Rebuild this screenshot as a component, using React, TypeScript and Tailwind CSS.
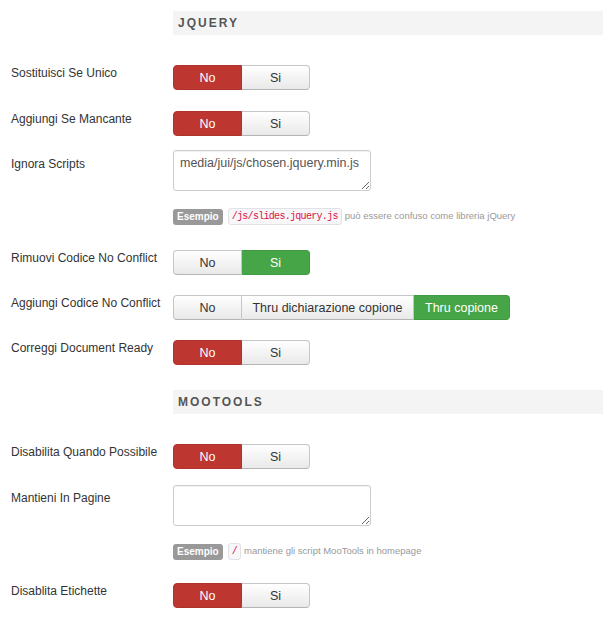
import type { ReactNode } from 'react'

type Seg = { label: string; width: number; active?: 'red' | 'green' }

function SegGroup({ segs }: { segs: Seg[] }) {
  return (
    <div className="flex h-[25px]">
      {segs.map((s, i) => {
        const first = i === 0
        const last = i === segs.length - 1
        const tone =
          s.active === 'red'
            ? 'bg-[#bd362f] border-[#b0322c] text-white'
            : s.active === 'green'
              ? 'bg-[#46a546] border-[#419a41] text-white'
              : 'bg-linear-to-b from-white to-[#e9e9e9] border-[#c6c6c6] border-b-[#b5b5b5] text-[#333]'
        return (
          <div
            key={s.label}
            style={{ width: s.width }}
            className={`flex items-center justify-center border text-[12.5px] leading-[18px] ${tone} ${
              first ? 'rounded-l-[4px]' : ''
            } ${last ? 'rounded-r-[4px]' : ''} ${!first ? 'border-l-0' : ''}`}
          >
            {s.label}
          </div>
        )
      })}
    </div>
  )
}

function Row({ label, top, children, labelOffset = 0 }: { label: string; top: number; children: ReactNode; labelOffset?: number }) {
  return (
    <div className="flex items-start" style={{ marginTop: top }}>
      <div className="w-[173px] shrink-0 pl-[11px] text-[12px] leading-[14px] text-[#333]" style={{ paddingTop: labelOffset }}>
        {label}
      </div>
      {children}
    </div>
  )
}

function Header({ title, top }: { title: string; top: number }) {
  return (
    <div className="ml-[173px] flex h-[24px] items-center bg-[#f4f4f4] pl-[5px]" style={{ marginTop: top }}>
      <span className="text-[12px] font-bold tracking-[2px] text-[#555]">{title}</span>
    </div>
  )
}

function Example({ code, text, top }: { code: string; text: string; top: number }) {
  return (
    <div className="ml-[173px] flex items-center" style={{ marginTop: top }}>
      <span className="flex h-[16px] items-center rounded-[3px] bg-[#999] px-[4px] text-[10px] font-bold text-white">
        Esempio
      </span>
      <span className="ml-[5px] flex h-[17px] items-center rounded-[3px] border border-[#e1e1e8] bg-[#f7f7f9] px-[3px] font-['Liberation_Mono',monospace] text-[10px] tracking-[-0.7px] text-[#d14]">
        {code}
      </span>
      <span className="ml-[3px] text-[9.5px] text-[#999]">{text}</span>
    </div>
  )
}

function Area({ value }: { value: string }) {
  return (
    <textarea
      defaultValue={value}
      className="h-[41px] w-[198px] rounded-[3px] border border-[#ccc] px-[6px] py-[3px] text-[12.5px] leading-[18px] text-[#555] shadow-[inset_0_1px_1px_rgba(0,0,0,0.06)] outline-none"
    />
  )
}

const noSi = (active: 'no' | 'si'): Seg[] => [
  { label: 'No', width: 69, active: active === 'no' ? 'red' : undefined },
  { label: 'Si', width: 68, active: active === 'si' ? 'green' : undefined },
]

export default function App() {
  return (
    <div className="flex h-[628px] w-[603px] flex-col overflow-hidden bg-white font-['Liberation_Sans',Arial,sans-serif]">
      <Header title="JQUERY" top={11} />

      <Row label="Sostituisci Se Unico" top={30} labelOffset={1}>
        <SegGroup segs={noSi('no')} />
      </Row>
      <Row label="Aggiungi Se Mancante" top={21} labelOffset={1}>
        <SegGroup segs={noSi('no')} />
      </Row>
      <Row label="Ignora Scripts" top={14} labelOffset={7}>
        <Area value="media/jui/js/chosen.jquery.min.js" />
      </Row>
      <Example code="/js/slides.jquery.js" text="può essere confuso come libreria jQuery" top={17} />

      <Row label="Rimuovi Codice No Conflict" top={25} labelOffset={1}>
        <SegGroup segs={noSi('si')} />
      </Row>
      <Row label="Aggiungi Codice No Conflict" top={20} labelOffset={1}>
        <SegGroup
          segs={[
            { label: 'No', width: 69 },
            { label: 'Thru dichiarazione copione', width: 172 },
            { label: 'Thru copione', width: 96, active: 'green' },
          ]}
        />
      </Row>
      <Row label="Correggi Document Ready" top={20} labelOffset={1}>
        <SegGroup segs={noSi('no')} />
      </Row>

      <Header title="MOOTOOLS" top={25} />

      <Row label="Disabilita Quando Possibile" top={30} labelOffset={1}>
        <SegGroup segs={noSi('no')} />
      </Row>
      <Row label="Mantieni In Pagine" top={16} labelOffset={6}>
        <Area value="" />
      </Row>
      <Example code="/" text="mantiene gli script MooTools in homepage" top={17} />

      <Row label="Disablita Etichette" top={23} labelOffset={1}>
        <SegGroup segs={noSi('no')} />
      </Row>
    </div>
  )
}
